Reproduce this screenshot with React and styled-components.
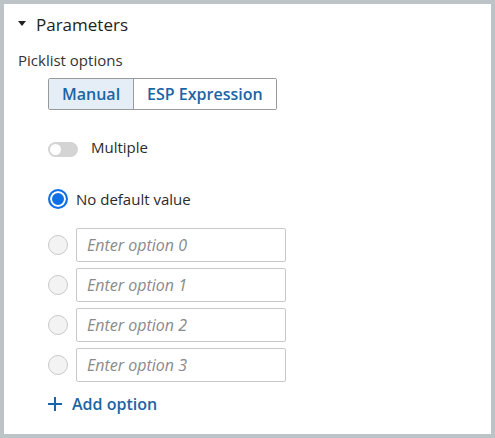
import React from "react";
import styled, { createGlobalStyle } from "styled-components";

const Global = createGlobalStyle`
  html, body { margin: 0; padding: 0; background: #bcc4c7; }
  body { font-family: "Open Sans", "Noto Sans", sans-serif; color: #2b2b2b; }
  * { box-sizing: border-box; }
`;

const Frame = styled.div`
  width: 495px;
  height: 438px;
  padding: 4px;
  background: #bcc4c7;
`;

const Panel = styled.div`
  height: 100%;
  background: #ffffff;
  padding: 9px 14px 0 14px;
  display: flex;
  flex-direction: column;
`;

const Header = styled.div`
  display: flex;
  align-items: flex-start;
  height: 24px;
`;

const Caret = styled.svg`
  width: 8px;
  height: 5px;
  margin-top: 8px;
  margin-right: 10px;
  flex: none;
`;

const Title = styled.div`
  font-size: 17px;
  line-height: 24px;
  color: #222;
`;

const Label = styled.div`
  margin-top: 13px;
  font-size: 15px;
  line-height: 20px;
  color: #333;
`;

const Body = styled.div`
  padding-left: 30px;
  display: flex;
  flex-direction: column;
`;

const Segmented = styled.div`
  margin-top: 8px;
  display: flex;
  align-self: flex-start;
  height: 32px;
  border: 1px solid #999;
  border-radius: 2px;
  overflow: hidden;
`;

const Segment = styled.button`
  font-family: inherit;
  font-size: 16px;
  font-weight: 600;
  color: #1b65a6;
  background: ${(p) => (p.$active ? "#e5eef7" : "#ffffff")};
  border: none;
  border-left: ${(p) => (p.$first ? "none" : "1px solid #999")};
  padding: 0 13px;
  height: 100%;
  cursor: pointer;
`;

const ToggleRow = styled.div`
  margin-top: 27px;
  display: flex;
  align-items: flex-start;
  gap: 13px;
`;

const Track = styled.div`
  margin-top: 5px;
  width: 30px;
  height: 15px;
  border-radius: 8px;
  background: #d4d4d4;
  display: flex;
  align-items: center;
  padding: 0 2px;
`;

const Knob = styled.div`
  width: 11px;
  height: 11px;
  border-radius: 50%;
  background: #fff;
`;

const Text = styled.div`
  font-size: 15px;
  line-height: 20px;
  color: #2b2b2b;
`;

const RadioRow = styled.div`
  display: flex;
  align-items: center;
  gap: 8px;
  margin-top: ${(p) => p.$mt || 0}px;
`;

const Radio = styled.span`
  flex: none;
  width: 20px;
  height: 20px;
  border-radius: 50%;
  ${(p) =>
    p.$checked
      ? `border: 2px solid #0f6fe6; background: #0f6fe6; box-shadow: inset 0 0 0 2px #fff;`
      : `border: 1px solid #c9c9c9; background: #f3f3f3;`}
`;

const OptionList = styled.div`
  margin-top: 19px;
  display: flex;
  flex-direction: column;
  gap: 6px;
`;

const OptionInput = styled.input`
  width: 210px;
  height: 34px;
  border: 1px solid #c9c9c9;
  border-radius: 2px;
  padding: 0 10px;
  font-family: inherit;
  font-size: 16px;
  font-style: italic;
  color: #333;
  outline: none;
  &::placeholder { color: #8a8a8a; font-style: italic; }
`;

const AddButton = styled.button`
  margin-top: 12px;
  align-self: flex-start;
  display: flex;
  align-items: center;
  gap: 10px;
  background: none;
  border: none;
  padding: 0;
  font-family: inherit;
  font-size: 16px;
  font-weight: 600;
  line-height: 20px;
  color: #1b65a6;
  cursor: pointer;
`;

export default function App() {
  return (
    <>
      <Global />
      <Frame>
        <Panel>
          <Header>
            <Caret viewBox="0 0 8 5">
              <path d="M0 0 L8 0 L4 5 Z" fill="#222" />
            </Caret>
            <Title>Parameters</Title>
          </Header>
          <Label>Picklist options</Label>
          <Body>
            <Segmented>
              <Segment $active $first>Manual</Segment>
              <Segment>ESP Expression</Segment>
            </Segmented>
            <ToggleRow>
              <Track>
                <Knob />
              </Track>
              <Text>Multiple</Text>
            </ToggleRow>
            <RadioRow $mt={32}>
              <Radio $checked />
              <Text>No default value</Text>
            </RadioRow>
            <OptionList>
              {[0, 1, 2, 3].map((i) => (
                <RadioRow key={i}>
                  <Radio />
                  <OptionInput placeholder={`Enter option ${i}`} />
                </RadioRow>
              ))}
            </OptionList>
            <AddButton>
              <svg width="14" height="14" viewBox="0 0 14 14">
                <path d="M7 0 V14 M0 7 H14" stroke="#1b65a6" strokeWidth="2" />
              </svg>
              Add option
            </AddButton>
          </Body>
        </Panel>
      </Frame>
    </>
  );
}
